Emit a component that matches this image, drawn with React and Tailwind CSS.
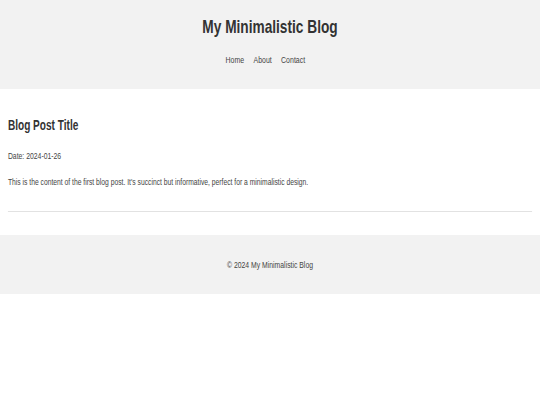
const NAV = ["Home", "About", "Contact"];

export default function App() {
  return (
    <div className="w-full min-h-[405px] overflow-hidden bg-white">
      {/* page rendered wide and squeezed horizontally, as in the capture */}
      <div
        className="w-[750px] origin-top-left scale-x-[0.72] text-[#333]"
        style={{ fontFamily: '"Liberation Sans", Arial, sans-serif' }}
      >
        <header className="bg-[#f2f2f2] pt-[15px] pb-[22px] text-center">
          <h1 className="text-[19px] leading-[24px] font-bold text-[#333]">
            My Minimalistic Blog
          </h1>
          <nav className="mt-[14px] flex justify-center text-[9.7px] leading-[14px] text-[#444]">
            {NAV.map((item) => (
              <a key={item} href="#" className="mr-[13px] text-[#444]">
                {item}
              </a>
            ))}
          </nav>
        </header>

        <main className="px-[11px] pt-[27px] pb-[23px]">
          <article>
            <h2 className="text-[14px] leading-[18px] font-bold text-[#333]">
              Blog Post Title
            </h2>
            <p className="mt-[16px] text-[9.5px] leading-[12px] text-[#444]">
              Date: 2024-01-26
            </p>
            <p className="mt-[14px] text-[9.4px] leading-[12px] text-[#444]">
              This is the content of the first blog post. It's succinct but
              informative, perfect for a minimalistic design.
            </p>
          </article>
          <hr className="mt-[23px] border-0 border-t border-[#e2e2e2]" />
        </main>

        <footer className="bg-[#f2f2f2] pt-[24px] pb-[23px] text-center">
          <p className="text-[9.5px] leading-[12px] text-[#444]">
            © 2024 My Minimalistic Blog
          </p>
        </footer>
      </div>
    </div>
  );
}
